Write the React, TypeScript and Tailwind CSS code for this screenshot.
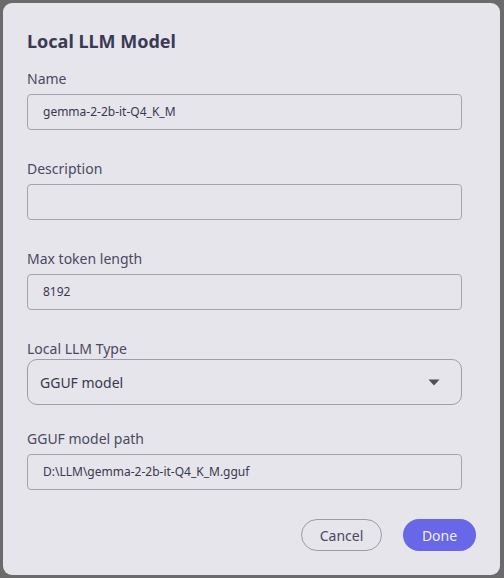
import React from "react";

const font = { fontFamily: '"Noto Sans", "Open Sans", sans-serif' };

function Field({ label, value, mt }: { label: string; value: string; mt: string }) {
  return (
    <div className={mt}>
      <div className="h-5 leading-5 text-[14px] text-[#4b4962]">{label}</div>
      <div className="mt-[5px] h-9 w-[435px] rounded-[4px] border border-[#a6a4b2] flex items-center pl-[15px] text-[12px] text-[#3a384f]">
        {value}
      </div>
    </div>
  );
}

export default function App() {
  return (
    <div className="w-[504px] h-[578px] bg-[#6b6b6b] pt-[3px] pl-[3px]" style={font}>
      <div className="w-[497px] h-[572px] bg-[#e6e5eb] rounded-[9px] pl-6 pt-6 flex flex-col">
        <div className="h-7 leading-7 text-[18px] font-bold text-[#3b3a54]">Local LLM Model</div>
        <Field label="Name" value="gemma-2-2b-it-Q4_K_M" mt="mt-[14px]" />
        <Field label="Description" value="" mt="mt-[29px]" />
        <Field label="Max token length" value="8192" mt="mt-[29px]" />
        <div className="mt-[29px]">
          <div className="h-5 leading-5 text-[14px] text-[#4b4962]">Local LLM Type</div>
          <div className="h-[46px] w-[435px] rounded-[10px] border border-[#9f9dab] flex items-center justify-between pl-[12px] pr-[21px] text-[14px] text-[#3a384f]">
            <span>GGUF model</span>
            <svg width="12" height="7" viewBox="0 0 12 7">
              <path d="M0.5 0.5 L11.5 0.5 L6 6.5 Z" fill="#4f4e5a" />
            </svg>
          </div>
        </div>
        <Field label="GGUF model path" value="D:\LLM\gemma-2-2b-it-Q4_K_M.gguf" mt="mt-[24px]" />
        <div className="mt-[29px] flex justify-end gap-[21px] pr-6">
          <button className="h-8 w-[81px] rounded-full border border-[#9c9aa8] text-[14px] text-[#4a4860]">Cancel</button>
          <button className="h-8 w-[73px] rounded-full bg-[#6767e8] text-[14px] text-[#eeeefb]">Done</button>
        </div>
      </div>
    </div>
  );
}
